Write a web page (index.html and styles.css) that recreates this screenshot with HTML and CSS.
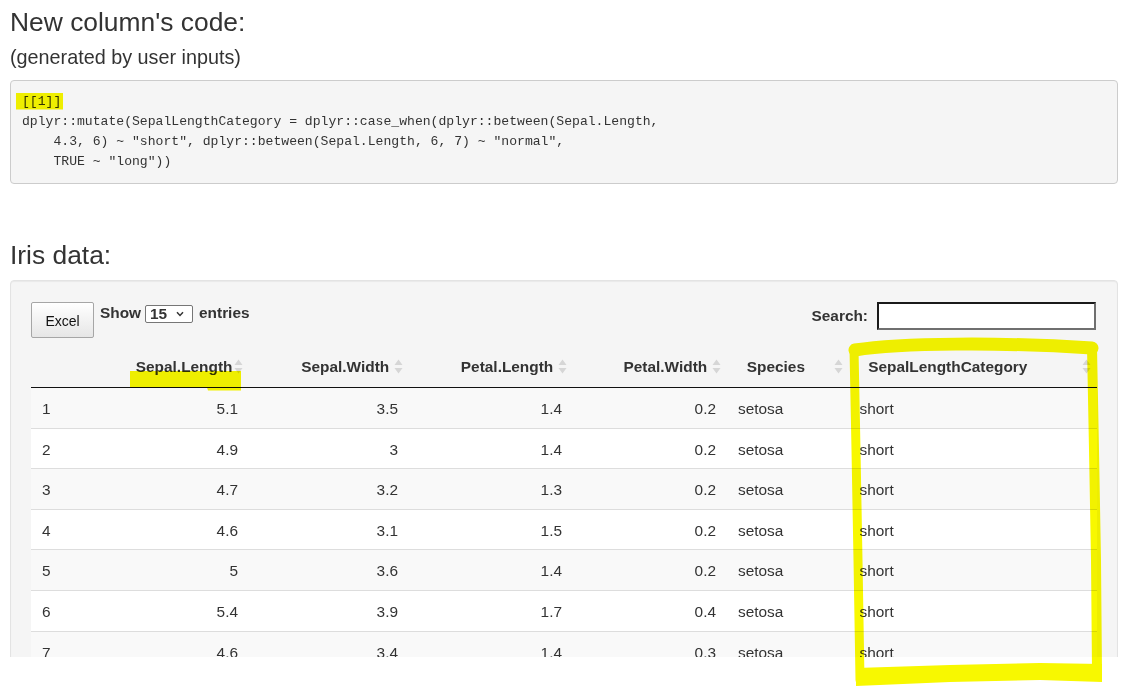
FILE: index.html
```html
<!DOCTYPE html>
<html>
<head>
<meta charset="utf-8">
<link rel="stylesheet" href="styles.css">
</head>
<body>
<div class="viewport">
  <h3 class="title">New column's code:</h3>
  <h4 class="subtitle">(generated by user inputs)</h4>
  <pre class="code">[[1]]
dplyr::mutate(SepalLengthCategory = dplyr::case_when(dplyr::between(Sepal.Length, 
    4.3, 6) ~ "short", dplyr::between(Sepal.Length, 6, 7) ~ "normal", 
    TRUE ~ "long"))</pre>

  <h3 class="title second">Iris data:</h3>
  <div class="well">
    <div class="controls">
      <div class="btn-excel">Excel</div>
      <div class="length">
        <span>Show</span>
        <span class="select"><span class="select-val">15</span>
          <svg class="chev" width="8" height="6" viewBox="0 0 8 6"><path d="M1 1.2 L4 4.4 L7 1.2" fill="none" stroke="#333" stroke-width="1.5"/></svg>
        </span>
        <span>entries</span>
      </div>
      <div class="search">
        <span>Search:</span>
        <span class="input"></span>
      </div>
    </div>
    <table class="dt">
      <colgroup>
        <col class="c-idx"><col class="c-sl"><col class="c-sw"><col class="c-pl"><col class="c-pw"><col class="c-sp"><col class="c-cat">
      </colgroup>
      <thead>
        <tr>
          <th></th>
          <th class="num">Sepal.Length<svg class="sort" width="9" height="19" viewBox="0 0 9 19"><path d="M0.5 8 L4.5 2.5 L8.5 8 Z M0.5 11 L4.5 16.5 L8.5 11 Z" fill="#d6d6d6"/></svg></th>
          <th class="num">Sepal.Width<svg class="sort" width="9" height="19" viewBox="0 0 9 19"><path d="M0.5 8 L4.5 2.5 L8.5 8 Z M0.5 11 L4.5 16.5 L8.5 11 Z" fill="#d6d6d6"/></svg></th>
          <th class="num">Petal.Length<svg class="sort" width="9" height="19" viewBox="0 0 9 19"><path d="M0.5 8 L4.5 2.5 L8.5 8 Z M0.5 11 L4.5 16.5 L8.5 11 Z" fill="#d6d6d6"/></svg></th>
          <th class="num">Petal.Width<svg class="sort" width="9" height="19" viewBox="0 0 9 19"><path d="M0.5 8 L4.5 2.5 L8.5 8 Z M0.5 11 L4.5 16.5 L8.5 11 Z" fill="#d6d6d6"/></svg></th>
          <th>Species<svg class="sort" width="9" height="19" viewBox="0 0 9 19"><path d="M0.5 8 L4.5 2.5 L8.5 8 Z M0.5 11 L4.5 16.5 L8.5 11 Z" fill="#d6d6d6"/></svg></th>
          <th>SepalLengthCategory<svg class="sort" width="9" height="19" viewBox="0 0 9 19"><path d="M0.5 8 L4.5 2.5 L8.5 8 Z M0.5 11 L4.5 16.5 L8.5 11 Z" fill="#d6d6d6"/></svg></th>
        </tr>
      </thead>
      <tbody>
        <tr><td>1</td><td class="num">5.1</td><td class="num">3.5</td><td class="num">1.4</td><td class="num">0.2</td><td>setosa</td><td>short</td></tr>
        <tr><td>2</td><td class="num">4.9</td><td class="num">3</td><td class="num">1.4</td><td class="num">0.2</td><td>setosa</td><td>short</td></tr>
        <tr><td>3</td><td class="num">4.7</td><td class="num">3.2</td><td class="num">1.3</td><td class="num">0.2</td><td>setosa</td><td>short</td></tr>
        <tr><td>4</td><td class="num">4.6</td><td class="num">3.1</td><td class="num">1.5</td><td class="num">0.2</td><td>setosa</td><td>short</td></tr>
        <tr><td>5</td><td class="num">5</td><td class="num">3.6</td><td class="num">1.4</td><td class="num">0.2</td><td>setosa</td><td>short</td></tr>
        <tr><td>6</td><td class="num">5.4</td><td class="num">3.9</td><td class="num">1.7</td><td class="num">0.4</td><td>setosa</td><td>short</td></tr>
        <tr><td>7</td><td class="num">4.6</td><td class="num">3.4</td><td class="num">1.4</td><td class="num">0.3</td><td>setosa</td><td>short</td></tr>
        <tr><td>8</td><td class="num">5</td><td class="num">3.4</td><td class="num">1.5</td><td class="num">0.2</td><td>setosa</td><td>short</td></tr>
      </tbody>
    </table>
  </div>
</div>

<svg class="annot" width="1133" height="687" viewBox="0 0 1133 687">
  <rect x="16" y="93" width="47" height="16.5" fill="#f8f800"/>
  <polygon points="130,371 241,371 241,390.5 208,390.5 207,387.5 130,387.5" fill="#f8f800"/>
  <g fill="none" stroke="#f8f800" stroke-linecap="round" stroke-linejoin="round">
    <path d="M855 350 C 900 343, 1000 342, 1092 348" stroke-width="13"/>
    <path d="M1092 347 L1094 450 L1096 560 L1097 672" stroke-width="10"/>
    <path d="M854 349 L856 450 L858 560 L860 680" stroke-width="9"/>
  </g>
  <polygon points="856,668 950,665 1040,663 1102,664 1102,682 1040,680 950,682 856,686" fill="#f8f800"/>
</svg>
</body>
</html>
```

FILE: styles.css
```css
html, body {
  margin: 0;
  padding: 0;
  background: #ffffff;
}

body {
  font-family: "Liberation Sans", Arial, sans-serif;
  font-size: 15.4px;
  color: #333333;
  position: relative;
  min-height: 687px;
}

.viewport {
  height: 657px;
  overflow: hidden;
  padding: 0 15px 0 10px;
  box-sizing: border-box;
}

.title {
  font-size: 26.4px;
  font-weight: normal;
  line-height: 30px;
  margin: 7px 0 0;
}

.title.second {
  margin-top: 56px;
}

.subtitle {
  font-size: 19.8px;
  font-weight: normal;
  line-height: 22px;
  margin: 8.5px 0 0;
}

.code {
  margin: 12.5px 0 0;
  padding: 11px 10px 11px 11px;
  border: 1px solid #cccccc;
  border-radius: 4px;
  background: #f5f5f5;
  font-family: "Liberation Mono", "Courier New", monospace;
  font-size: 13.1px;
  line-height: 20px;
  color: #333333;
  white-space: pre;
  overflow: hidden;
}

.well {
  margin-top: 10px;
  background: #f5f5f5;
  border: 1px solid #e3e3e3;
  border-radius: 4px;
  box-shadow: inset 0 1px 1px rgba(0, 0, 0, 0.05);
  padding: 21px 20px;
}

.controls {
  display: flex;
  align-items: flex-start;
  height: 36px;
}

.btn-excel {
  width: 63px;
  height: 36px;
  box-sizing: border-box;
  border: 1px solid #a6a6a6;
  border-radius: 2px;
  background: linear-gradient(to bottom, #ffffff 0%, #e6e6e6 100%);
  font-size: 14px;
  color: #111111;
  display: flex;
  align-items: center;
  justify-content: center;
  padding-top: 1px;
}

.length {
  margin-left: 6px;
  margin-top: 1px;
  display: flex;
  align-items: center;
  height: 20px;
  font-weight: bold;
  line-height: 20px;
}

.select {
  width: 48px;
  height: 18px;
  box-sizing: border-box;
  margin: 1px 6px 0 4px;
  border: 1px solid #767676;
  border-radius: 2px;
  background: #ffffff;
  display: flex;
  align-items: center;
  justify-content: space-between;
  padding: 0 8px 0 4px;
  font-weight: bold;
  line-height: 16px;
}

.chev {
  display: block;
}

.search {
  margin-left: auto;
  display: flex;
  align-items: center;
  height: 28px;
  font-weight: bold;
}

.input {
  display: block;
  width: 219px;
  height: 28px;
  box-sizing: border-box;
  margin-left: 9px;
  margin-right: 1px;
  background: #ffffff;
  border-top: 2px solid #1a1a1a;
  border-left: 2px solid #1a1a1a;
  border-right: 2px solid #6f6f6f;
  border-bottom: 2px solid #6f6f6f;
}

.dt {
  width: 100%;
  margin-top: 5px;
  border-collapse: collapse;
  table-layout: fixed;
  font-size: 15.4px;
}

.c-idx { width: 85px; }
.c-sl { width: 133px; }
.c-sw { width: 160px; }
.c-pl { width: 164px; }
.c-pw { width: 154px; }
.c-sp { width: 121.5px; }
.c-cat { width: 248.5px; }

.dt th {
  position: relative;
  padding: 12.5px 19.8px 9.5px;
  line-height: 22px;
  font-weight: bold;
  text-align: left;
  border-bottom: 1px solid #111111;
  white-space: nowrap;
}

.dt th.num,
.dt td.num {
  text-align: right;
}

.sort {
  position: absolute;
  right: 6px;
  top: 50%;
  margin-top: -8px;
}

.dt td {
  padding: 10px 11px 7.6px;
  line-height: 22px;
  border-top: 1px solid #dddddd;
}

.dt tbody tr:first-child td {
  border-top: none;
}

.dt tbody tr:nth-child(odd) {
  background: #f9f9f9;
}

.dt tbody tr:nth-child(even) {
  background: #ffffff;
}

.annot {
  position: absolute;
  left: 0;
  top: 0;
  pointer-events: none;
  mix-blend-mode: multiply;
}
```
